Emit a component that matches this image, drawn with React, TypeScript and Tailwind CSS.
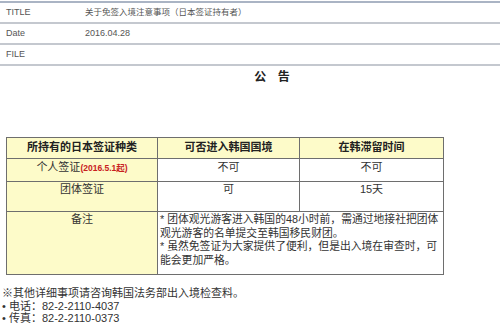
const font = "font-['Liberation_Sans','Noto_Sans_CJK_SC',sans-serif]";

const infoRows = [
  { label: 'TITLE', value: '关于免签入境注意事项（日本签证持有者）', small: true },
  { label: 'Date', value: '2016.04.28', small: false },
  { label: 'FILE', value: '', small: false },
];

const noteLines = [
  '* 团体观光游客进入韩国的48小时前，需通过地接社把团体',
  '观光游客的名单提交至韩国移民财团。',
  '* 虽然免签证为大家提供了便利，但是出入境在审查时，可',
  '能会更加严格。',
];

export default function App() {
  return (
    <div className={`w-[500px] h-[329px] overflow-hidden bg-white text-[#333] ${font}`}>
      {/* info header */}
      <div className="mt-[1px] border-t-2 border-[#aab4c4]">
        {infoRows.map((row) => (
          <div key={row.label} className="flex h-[21px] items-center border-b-2 border-[#c4c8cf] text-[9px] text-[#555]">
            <div className="w-[85px] pl-[6px]">{row.label}</div>
            <div className={row.small ? 'text-[8.5px]' : ''}>{row.value}</div>
          </div>
        ))}
      </div>

      {/* heading */}
      <div className="mt-[4px] pl-[48px] text-center text-[12px] font-bold tracking-[4px] leading-[14px] text-[#222]">
        公 告
      </div>

      {/* visa table */}
      <table className="mt-[53px] ml-[6px] w-[437px] table-fixed border-collapse text-[11px] leading-[13.5px]">
        <colgroup>
          <col className="w-[151px]" />
          <col className="w-[142px]" />
          <col className="w-[144px]" />
        </colgroup>
        <tbody>
          <tr className="h-[21px] bg-[#fdfbc9] font-bold text-[#222]">
            <td className="border border-[#6e6e6e] text-center align-middle">所持有的日本签证种类</td>
            <td className="border border-[#6e6e6e] text-center align-middle">可否进入韩国国境</td>
            <td className="border border-[#6e6e6e] text-center align-middle">在韩滞留时间</td>
          </tr>
          <tr className="h-[23px]">
            <td className="border border-[#6e6e6e] bg-[#fdfbc9] pt-[2px] text-center align-top">
              个人签证<span className="text-[8.5px] font-bold text-[#c8201e]">(2016.5.1起)</span>
            </td>
            <td className="border border-[#6e6e6e] pt-[2px] text-center align-top">不可</td>
            <td className="border border-[#6e6e6e] pt-[2px] text-center align-top">不可</td>
          </tr>
          <tr className="h-[30px]">
            <td className="border border-[#6e6e6e] bg-[#fdfbc9] pt-[1px] text-center align-top">团体签证</td>
            <td className="border border-[#6e6e6e] pt-[1px] text-center align-top">可</td>
            <td className="border border-[#6e6e6e] pt-[1px] text-center align-top">15天</td>
          </tr>
          <tr className="h-[63px]">
            <td className="border border-[#6e6e6e] bg-[#fdfbc9] pt-[1px] text-center align-top">备注</td>
            <td colSpan={2} className="border border-[#6e6e6e] pl-[2px] pr-0 pt-[1px] align-top text-[10.8px]">
              {noteLines.map((line) => (
                <div key={line} className="whitespace-nowrap">{line}</div>
              ))}
            </td>
          </tr>
        </tbody>
      </table>

      {/* footer notes */}
      <div className="mt-[12px] pl-[2px] text-[11px] leading-[12.5px]">
        <div>※其他详细事项请咨询韩国法务部出入境检查料。</div>
        <div>• 电话：82-2-2110-4037</div>
        <div>• 传真：82-2-2110-0373</div>
      </div>
    </div>
  );
}
